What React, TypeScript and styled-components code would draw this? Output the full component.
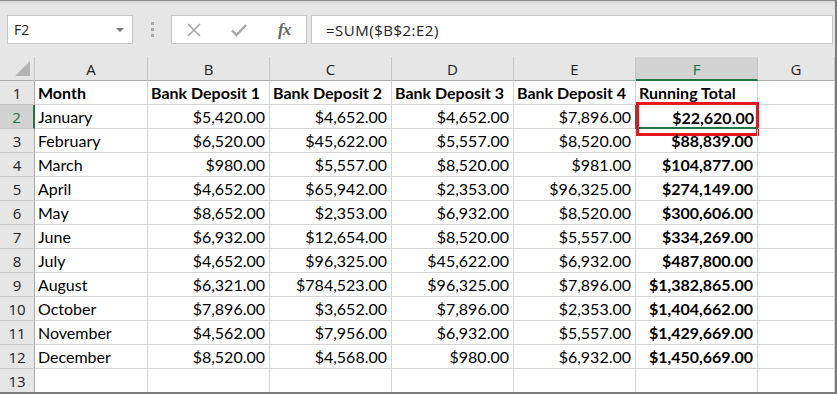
import styled, { createGlobalStyle } from "styled-components";

const GlobalStyle = createGlobalStyle`
  body {
    margin: 0;
    background: #ffffff;
  }
`;

const CELL_FONT = `Lato, "Liberation Sans", sans-serif`;
const UI_FONT = `"Open Sans", "Noto Sans", sans-serif`;
const GREEN = "#217346";

const Frame = styled.div`
  width: 837px;
  height: 394px;
  box-sizing: border-box;
  border-top: 1px solid #8a8a8a;
  border-right: 2px solid #7c7c7c;
  border-bottom: 2px solid #7c7c7c;
  background: #e6e6e6;
  overflow: hidden;
  display: flex;
  flex-direction: column;
`;

const Toolbar = styled.div`
  height: 56px;
  flex: none;
  box-sizing: border-box;
  padding: 14px 2px 0 7px;
  display: flex;
  align-items: flex-start;
  background: linear-gradient(#d9d9d9 0px, #e6e6e6 5px, #e6e6e6 100%);
`;

const NameBox = styled.div`
  width: 126px;
  height: 29px;
  box-sizing: border-box;
  border: 1px solid #c6c6c6;
  background: #fff;
  display: flex;
  align-items: center;
  justify-content: space-between;
  padding: 0 8px 0 6px;
  font-family: ${UI_FONT};
  font-size: 14px;
  color: #222;
`;

const DropArrow = styled.span`
  width: 0;
  height: 0;
  border-left: 4px solid transparent;
  border-right: 4px solid transparent;
  border-top: 4px solid #777;
`;

const Grip = styled.div`
  width: 38px;
  height: 29px;
  display: flex;
  flex-direction: column;
  align-items: center;
  justify-content: center;
  gap: 3px;
`;

const GripDot = styled.span`
  width: 3px;
  height: 3px;
  background: #aaa;
`;

const FormulaButtons = styled.div`
  width: 136px;
  height: 29px;
  box-sizing: border-box;
  border: 1px solid #c6c6c6;
  background: #fff;
  display: flex;
  align-items: center;
  padding-left: 14px;
  gap: 28px;
`;

const Fx = styled.span`
  font-family: "Liberation Serif", serif;
  font-style: italic;
  font-weight: bold;
  font-size: 17px;
  color: #666;
  letter-spacing: -1px;
  margin-left: 2px;
`;

const FormulaInput = styled.div`
  flex: 1;
  height: 29px;
  margin-left: 4px;
  box-sizing: border-box;
  border: 1px solid #c6c6c6;
  background: #fff;
  display: flex;
  align-items: center;
  padding-left: 14px;
  font-family: ${UI_FONT};
  font-size: 15px;
  letter-spacing: 0.5px;
  color: #222;
`;

const Sheet = styled.div`
  display: grid;
  grid-template-columns: 35px 113px repeat(5, 122px) 1fr;
  grid-auto-rows: 24px;
  background: #fff;
`;

const Corner = styled.div`
  background: #e6e6e6;
  border-right: 1px solid #c6c6c6;
  border-bottom: 1px solid #ababab;
  position: relative;
  &::after {
    content: "";
    position: absolute;
    right: 4px;
    bottom: 4px;
    width: 0;
    height: 0;
    border-left: 15px solid transparent;
    border-bottom: 15px solid #b4b4b4;
  }
`;

const ColHead = styled.div<{ $active?: boolean }>`
  background: ${(p) => (p.$active ? "#d2d2d2" : "#e6e6e6")};
  border-right: 1px solid #c6c6c6;
  border-bottom: ${(p) => (p.$active ? `2px solid ${GREEN}` : "1px solid #ababab")};
  box-sizing: border-box;
  display: flex;
  align-items: center;
  justify-content: center;
  padding-top: 1px;
  font-family: ${UI_FONT};
  font-size: 15px;
  color: ${(p) => (p.$active ? GREEN : "#222")};
`;

const RowHead = styled.div<{ $active?: boolean }>`
  background: ${(p) => (p.$active ? "#d2d2d2" : "#e6e6e6")};
  border-right: ${(p) => (p.$active ? `2px solid ${GREEN}` : "1px solid #ababab")};
  border-bottom: 1px solid #c6c6c6;
  box-sizing: border-box;
  display: flex;
  align-items: center;
  justify-content: center;
  font-family: ${UI_FONT};
  font-size: 15px;
  color: ${(p) => (p.$active ? GREEN : "#222")};
`;

const Cell = styled.div<{ $num?: boolean; $bold?: boolean }>`
  border-right: 1px solid #d4d4d4;
  border-bottom: 1px solid #d4d4d4;
  box-sizing: border-box;
  display: flex;
  align-items: flex-end;
  justify-content: ${(p) => (p.$num ? "flex-end" : "flex-start")};
  padding: 0 ${(p) => (p.$num ? "4px" : "0")} 2px ${(p) => (p.$num ? "0" : "3px")};
  font-family: ${CELL_FONT};
  font-size: 16px;
  font-weight: ${(p) => (p.$bold ? 700 : 400)};
  color: #000;
  white-space: nowrap;
  overflow: visible;
  position: relative;
`;

const ActiveCell = styled(Cell)`
  border: none;
  box-shadow: inset 2px 0 0 ${GREEN}, inset 0 -2px 0 ${GREEN};
  margin-left: -1px;
  padding-right: 4px;
`;

const Highlight = styled.div`
  position: absolute;
  left: 1px;
  top: -3px;
  width: 123px;
  height: 34px;
  box-sizing: border-box;
  border: 3px solid #e8151f;
  pointer-events: none;
`;

const COLS = ["A", "B", "C", "D", "E", "F", "G"];

const HEADERS = ["Month", "Bank Deposit 1", "Bank Deposit 2", "Bank Deposit 3", "Bank Deposit 4", "Running Total"];

const ROWS = [
  ["January", "$5,420.00", "$4,652.00", "$4,652.00", "$7,896.00", "$22,620.00"],
  ["February", "$6,520.00", "$45,622.00", "$5,557.00", "$8,520.00", "$88,839.00"],
  ["March", "$980.00", "$5,557.00", "$8,520.00", "$981.00", "$104,877.00"],
  ["April", "$4,652.00", "$65,942.00", "$2,353.00", "$96,325.00", "$274,149.00"],
  ["May", "$8,652.00", "$2,353.00", "$6,932.00", "$8,520.00", "$300,606.00"],
  ["June", "$6,932.00", "$12,654.00", "$8,520.00", "$5,557.00", "$334,269.00"],
  ["July", "$4,652.00", "$96,325.00", "$45,622.00", "$6,932.00", "$487,800.00"],
  ["August", "$6,321.00", "$784,523.00", "$96,325.00", "$7,896.00", "$1,382,865.00"],
  ["October", "$7,896.00", "$3,652.00", "$7,896.00", "$2,353.00", "$1,404,662.00"],
  ["November", "$4,562.00", "$7,956.00", "$6,932.00", "$5,557.00", "$1,429,669.00"],
  ["December", "$8,520.00", "$4,568.00", "$980.00", "$6,932.00", "$1,450,669.00"],
];

function CancelIcon() {
  return (
    <svg width="16" height="16" viewBox="0 0 16 16">
      <path d="M2 2 L14 14 M14 2 L2 14" stroke="#a6a6a6" strokeWidth="1.6" fill="none" />
    </svg>
  );
}

function EnterIcon() {
  return (
    <svg width="18" height="16" viewBox="0 0 18 16">
      <path d="M2 8.5 L6.5 13 L16 3" stroke="#a6a6a6" strokeWidth="2.4" fill="none" />
    </svg>
  );
}

export default function App() {
  return (
    <>
      <GlobalStyle />
      <Frame>
        <Toolbar>
          <NameBox>
            <span>F2</span>
            <DropArrow />
          </NameBox>
          <Grip>
            <GripDot />
            <GripDot />
            <GripDot />
          </Grip>
          <FormulaButtons>
            <CancelIcon />
            <EnterIcon />
            <Fx>fx</Fx>
          </FormulaButtons>
          <FormulaInput>=SUM($B$2:E2)</FormulaInput>
        </Toolbar>
        <Sheet>
          <Corner />
          {COLS.map((c) => (
            <ColHead key={c} $active={c === "F"}>
              {c}
            </ColHead>
          ))}

          <RowHead>1</RowHead>
          {HEADERS.map((h) => (
            <Cell key={h} $bold>
              {h}
            </Cell>
          ))}
          <Cell />

          {ROWS.map((row, i) => (
            <>
              <RowHead key={"r" + i} $active={i === 0}>
                {i + 2}
              </RowHead>
              {row.map((v, j) =>
                i === 0 && j === 5 ? (
                  <ActiveCell key={j} $num $bold>
                    {v}
                    <Highlight />
                  </ActiveCell>
                ) : (
                  <Cell key={j} $num={j > 0} $bold={j === 5}>
                    {v}
                  </Cell>
                )
              )}
              <Cell />
            </>
          ))}

          <RowHead>13</RowHead>
          {COLS.map((c) => (
            <Cell key={"e" + c} />
          ))}
        </Sheet>
      </Frame>
    </>
  );
}
